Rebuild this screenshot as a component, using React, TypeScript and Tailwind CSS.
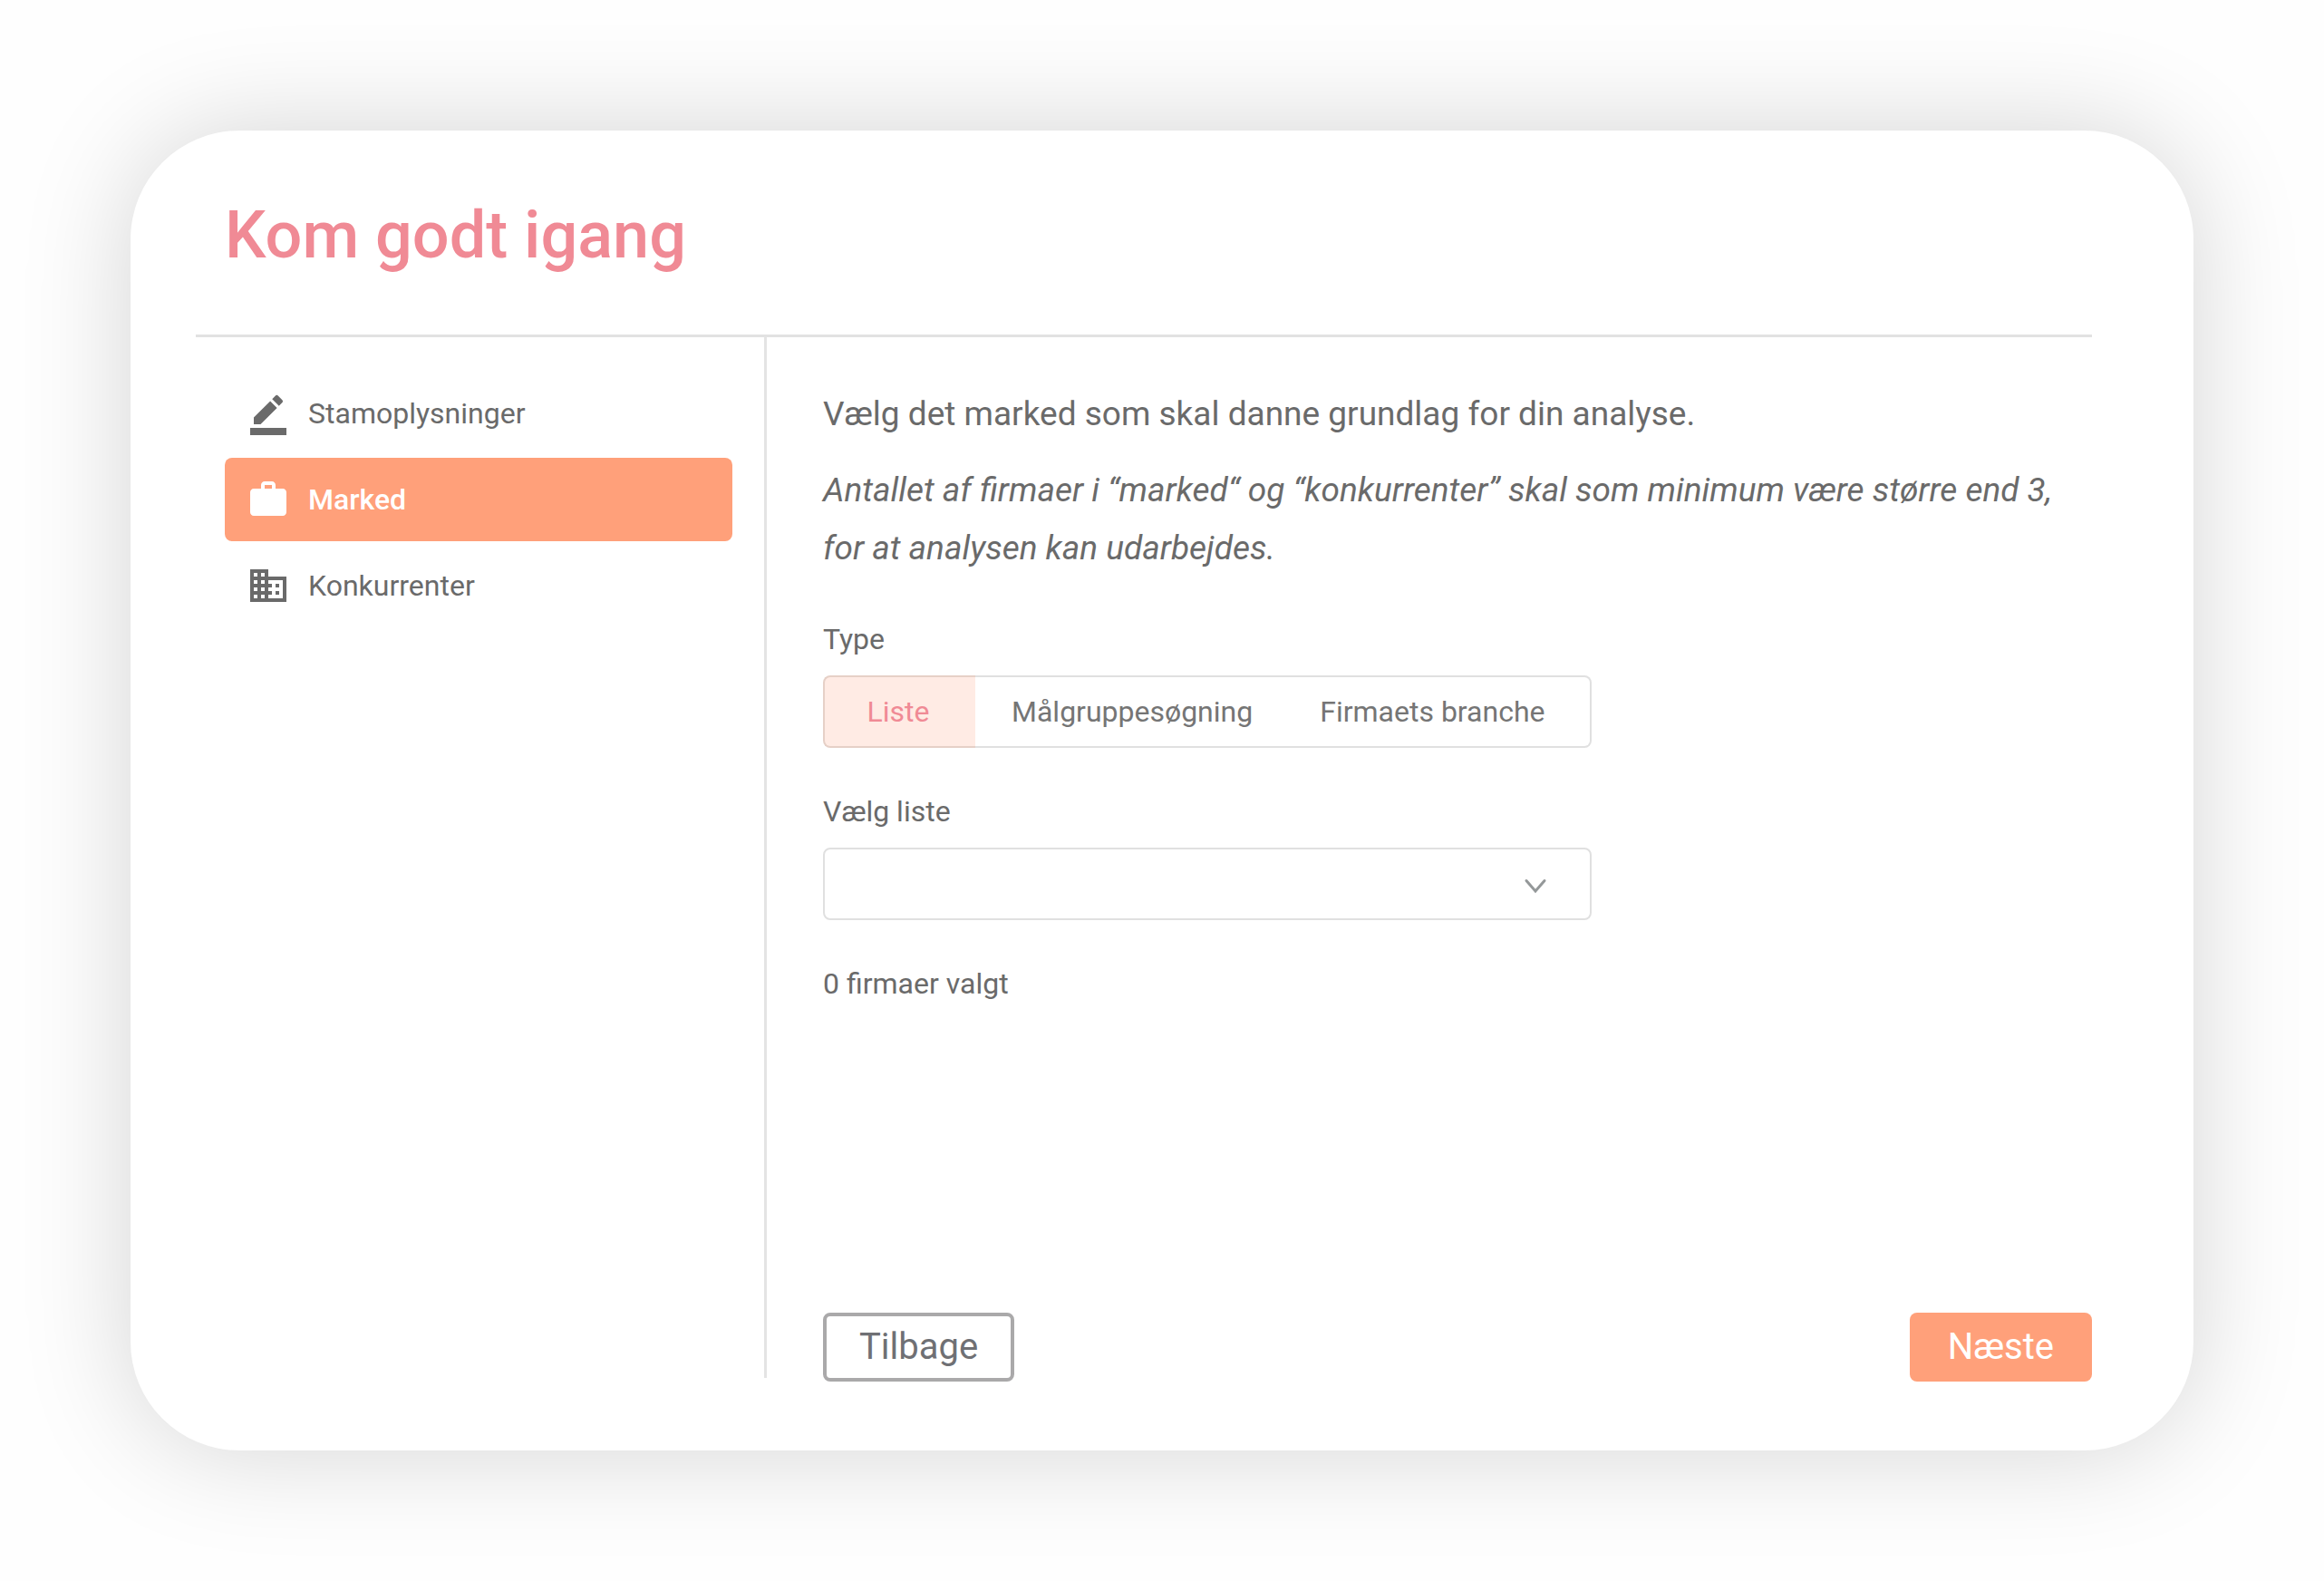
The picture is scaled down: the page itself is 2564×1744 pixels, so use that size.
import { useState } from 'react';
import { MdBorderColor, MdBusiness, MdWork } from 'react-icons/md';
import clsx from 'clsx';

const steps = [
  { label: 'Stamoplysninger', icon: MdBorderColor },
  { label: 'Marked', icon: MdWork },
  { label: 'Konkurrenter', icon: MdBusiness },
];

function Sidebar() {
  const [active, setActive] = useState('Marked');

  return (
    <nav className="w-[630px] shrink-0 border-r-[3px] border-[#e4e4e4] pl-8 pr-[35px] pt-[38px] mb-1">
      <ul className="flex flex-col gap-[3px]">
        {steps.map(({ label, icon: Icon }) => (
          <li key={label}>
            <button
              type="button"
              onClick={() => setActive(label)}
              className={clsx(
                'flex h-[92px] w-full items-center gap-5 rounded-lg px-6 text-[32px] leading-10',
                active === label ? 'bg-[#ffa07a] font-medium text-white' : 'text-[#6a6a6a]'
              )}
            >
              <Icon className="size-12 shrink-0" />
              <span>{label}</span>
            </button>
          </li>
        ))}
      </ul>
    </nav>
  );
}

function TypePicker() {
  const [type, setType] = useState('Liste');
  const color = (name: string) =>
    type === name ? 'border-[#e6d0c7] bg-[#ffebe4] text-[#f08a95]' : 'border-[#e0e0e0] text-[#757575]';

  return (
    <div role="group" aria-labelledby="type-label" className="flex h-20 text-[32px] leading-10">
      <button
        type="button"
        aria-pressed={type === 'Liste'}
        onClick={() => setType('Liste')}
        className={clsx('w-[168px] rounded-l-lg border-y-2 border-l-2 pr-1', color('Liste'))}
      >
        Liste
      </button>
      <button
        type="button"
        aria-pressed={type === 'Målgruppesøgning'}
        onClick={() => setType('Målgruppesøgning')}
        className={clsx('border-y-2 pl-10 pr-9', color('Målgruppesøgning'))}
      >
        Målgruppesøgning
      </button>
      <button
        type="button"
        aria-pressed={type === 'Firmaets branche'}
        onClick={() => setType('Firmaets branche')}
        className={clsx('grow rounded-r-lg border-y-2 border-r-2 px-[38px] text-left', color('Firmaets branche'))}
      >
        Firmaets branche
      </button>
    </div>
  );
}

export default function App() {
  return (
    <div className="flex min-h-screen bg-[#fefefe] p-36 font-[Roboto,sans-serif] text-[#6a6a6a]">
      <div className="flex grow flex-col rounded-[120px] bg-white pb-[76px] pl-[72px] pr-28 shadow-[0_0_120px_rgba(0,0,0,0.17)]">
        <header className="border-b-[3px] border-[#e2e2e2] pb-[67px] pl-8 pt-[74px]">
          <h1 className="text-[72px] font-medium leading-[84px] text-[#f08a95]">Kom godt igang</h1>
        </header>

        <div className="flex grow">
          <Sidebar />

          <main className="flex grow flex-col pl-[62px] pt-[53px]">
            <div className="flex flex-col gap-5 text-[37px] leading-[64px]">
              <p>Vælg det marked som skal danne grundlag for din analyse.</p>
              <p className="italic">
                Antallet af firmaer i “marked“ og “konkurrenter” skal som minimum være større end 3,
                <br />
                for at analysen kan udarbejdes.
              </p>
            </div>

            <div className="mt-12 flex max-w-[848px] flex-col gap-[50px] text-[32px] leading-10">
              <div className="flex flex-col gap-5">
                <span id="type-label">Type</span>
                <TypePicker />
              </div>

              <div className="flex flex-col gap-5">
                <label htmlFor="liste">Vælg liste</label>
                <div className="relative">
                  <select
                    id="liste"
                    defaultValue=""
                    className="block h-20 w-full appearance-none rounded-lg border-2 border-[#e0e0e0] bg-white px-6"
                  >
                    <option value=""></option>
                  </select>
                  <svg
                    className="pointer-events-none absolute right-12 top-8 h-5 w-7"
                    viewBox="0 0 28 20"
                    fill="none"
                    stroke="#949899"
                    strokeWidth="3"
                    strokeLinecap="round"
                  >
                    <path d="M4 4.5l10 11.5L24 4.5" />
                  </svg>
                </div>
              </div>

              <p>0 firmaer valgt</p>
            </div>

            <div className="mt-auto flex justify-between text-[40px] leading-[48px]">
              <button type="button" className="h-[76px] rounded-lg border-4 border-[#aaa9aa] px-9 text-[#6f7074]">
                Tilbage
              </button>
              <button type="button" className="h-[76px] rounded-lg bg-[#ffa07a] px-[42px] text-white">
                Næste
              </button>
            </div>
          </main>
        </div>
      </div>
    </div>
  );
}
